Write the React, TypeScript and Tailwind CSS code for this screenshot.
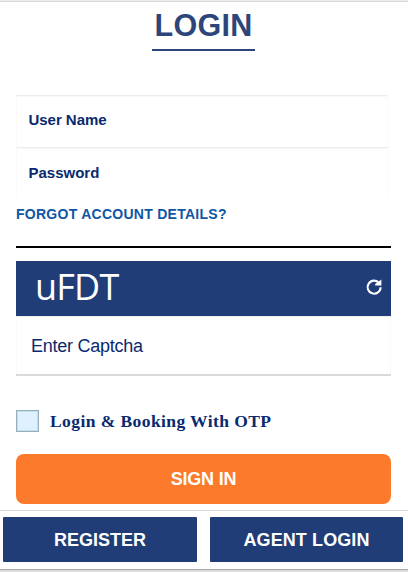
export default function App() {
  return (
    <div className="flex h-[572px] w-[408px] flex-col overflow-hidden border-t border-[#ececec] bg-white font-['Liberation_Sans',Arial,sans-serif] text-[#0a2a6e]">
      <div className="h-px shrink-0 bg-[#d8d8d8]" />
      <header className="ml-[152px] flex h-[49px] w-[103px] shrink-0 justify-center border-b-2 border-[#2c467a]">
        <h1 className="mt-[5px] whitespace-nowrap text-[30.5px] font-bold leading-9 tracking-[0.3px] text-[#2c467a]">LOGIN</h1>
      </header>
      <form className="mt-11 flex shrink-0 flex-col px-4" onSubmit={(e) => e.preventDefault()}>
        <div className="flex h-[52px] w-[372px] items-center border-x border-t border-x-[#fafafa] border-t-[#ececec] pb-[3px] pl-[11.5px] text-[15px] font-bold shadow-[inset_0_1px_0_#f8f8f8]">
          <span className="tracking-[-0.03px]">User Name</span>
        </div>
        <div className="flex h-[50px] w-[373px] items-center border-x border-t border-x-[#fafafa] border-t-[#ececec] pl-[11.5px] pt-[2px] text-[15px] font-bold shadow-[inset_0_1px_0_#f8f8f8]">
          <span>Password</span>
        </div>
        <a className="mt-[9px] block h-[42px] w-[375px] border-b-2 border-black text-[14px] font-bold leading-4 tracking-[0.27px] text-[#0f56a5]">FORGOT ACCOUNT DETAILS?</a>
        <div className="mt-[13px] flex h-[55px] w-[375px] items-center justify-between bg-[#203d77] pl-[19px] pr-2 text-white">
          <span className="pb-[4px] font-['Open_Sans',sans-serif] text-[36px] leading-[50px] tracking-[-0.8px]">uFDT</span>
          <svg className="mb-[3px] h-[18px] w-[18px]" viewBox="0 0 18 18" fill="none">
            <path d="M14.1 5A6.5 6.5 0 1 0 15.6 9.2" stroke="white" strokeWidth="2.1" />
            <path d="M16.4 1.5V7.4H10.2V6Z" fill="white" />
          </svg>
        </div>
        <div className="flex h-[60px] w-[375px] items-center border-b-2 border-b-[#dadada] pl-[15px] pt-[2px] text-[18px] shadow-[inset_0_1px_0_#eeeeee,inset_1px_0_0_#fafafa,inset_-1px_0_0_#fafafa]">
          <span className="tracking-[-0.25px]">Enter Captcha</span>
        </div>
        <label className="mt-[34px] flex h-[22px] items-center">
          <span className="h-[22px] w-[23px] border border-[#95afbd] bg-[#dff1fe] shadow-[inset_1px_1px_0_#c8dfeb,inset_-1px_-1px_0_#c8dfeb]" />
          <span className="ml-[11px] whitespace-nowrap font-['Liberation_Serif',serif] text-[17.5px] font-bold tracking-[0.42px]">Login &amp; Booking With OTP</span>
        </label>
        <button className="mt-[22px] h-[50px] w-[375px] rounded-lg bg-[#fc7a2b] text-[18px] font-bold tracking-[-0.2px] text-white">SIGN IN</button>
      </form>
      <footer className="mt-[6px] flex h-[60px] shrink-0 gap-[13px] border-b border-t border-b-[#a8a8a8] border-t-[#dadada] pl-[3px] pt-[6px] text-[18px] font-bold text-white">
        <button className="h-[45px] w-[194px] rounded-[1px] bg-[#203d77] pt-px">REGISTER</button>
        <button className="h-[45px] w-[193px] rounded-[1px] bg-[#203d77] pt-px tracking-[0.1px]">AGENT LOGIN</button>
      </footer>
      <div className="h-[2px] shrink-0 bg-[#dedede]" />
    </div>
  );
}
